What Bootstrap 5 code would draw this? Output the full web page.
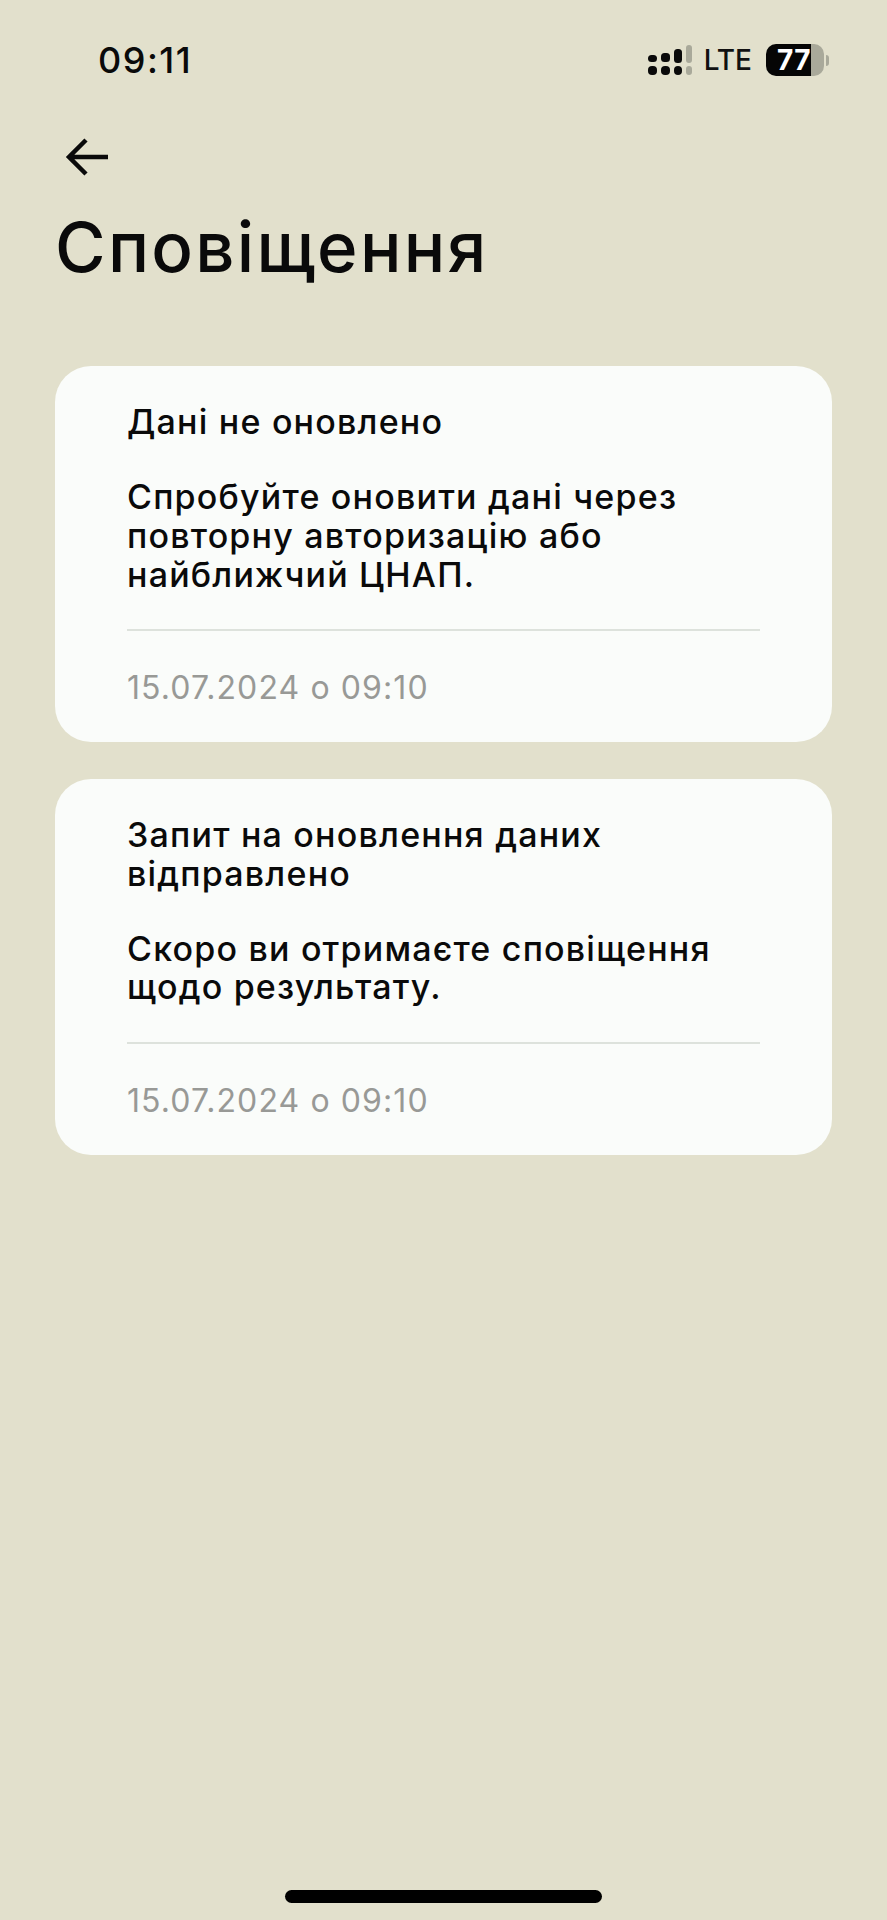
<!DOCTYPE html>
<html lang="uk">
<head>
<meta charset="utf-8">
<title>Сповіщення</title>
<link href="https://cdn.jsdelivr.net/npm/bootstrap@5.3.0/dist/css/bootstrap.min.css" rel="stylesheet">
<style>
body{background:#e2e0cc;color:#0a0a0a;font-family:"Inter","Liberation Sans",sans-serif;height:1920px;overflow:hidden}
.screen{padding:0 55px 17px}
.status-row{height:120px;padding:0 3px 0 43px}
.clock{font-size:36px;font-weight:500;letter-spacing:1.5px;line-height:1}
.lte{font-size:28px;font-weight:500;line-height:1;color:#111;margin:0 14px 0 11px}
.batt{width:58px;height:32px;border-radius:10px;background:linear-gradient(90deg,#050505 78%,#a9a99a 78%);color:#fff;font-size:28px;font-weight:700;line-height:32px;padding-left:11px;letter-spacing:.5px}
.nub{width:3px;height:11px;background:#a9a99a;border-radius:0 3px 3px 0;margin-left:2px}
.back-btn{height:40px;margin-left:10px;margin-top:18px}
.page-title{font-size:69px;font-weight:500;line-height:80px;margin:29px 0 79px;letter-spacing:2.3px}
.notice{background:#fafcfa;border:0;border-radius:36px;padding:37px 72px 35px;margin-bottom:36.5px}
.notice p{font-size:34px;font-weight:500;letter-spacing:1.2px;line-height:38.8px;margin:0}
.notice .gap-line{margin-top:36.2px}
.rule{height:2px;background:#dde2dc;margin:35px 0 37px}
.stamp{font-size:32px;line-height:39px;color:#989996;letter-spacing:1.1px}
.home-bar{width:317px;height:13px;background:#000;border-radius:7px;margin:auto auto 0}
</style>
</head>
<body>
<div class="screen d-flex flex-column vh-100">
  <div class="status-row d-flex align-items-center justify-content-between">
    <span class="clock">09:11</span>
    <div class="d-flex align-items-center">
      <svg width="45" height="30" viewBox="0 0 45 30" fill="#0a0a0a" aria-hidden="true">
        <rect x="0" y="10" width="9" height="7" rx="3.5"/><rect x="13" y="8" width="9" height="9" rx="3.5"/><rect x="26" y="4" width="8" height="14" rx="3.5"/>
        <rect x="0" y="21" width="9" height="9" rx="4"/><rect x="13" y="21" width="9" height="9" rx="4"/><rect x="26" y="21" width="8" height="9" rx="4"/>
        <rect x="38" y="0" width="6" height="18" rx="3" fill="#a9a99a"/><rect x="38" y="21" width="6" height="9" rx="3" fill="#a9a99a"/>
      </svg>
      <span class="lte">LTE</span>
      <div class="batt">77</div>
      <div class="nub"></div>
    </div>
  </div>
  <div class="back-btn">
    <svg width="44" height="38" viewBox="0 0 44 38" fill="none" stroke="#0a0a0a" stroke-width="4.5" aria-hidden="true"><path d="M43 19H4M21 2 4 19l17 17"/></svg>
  </div>
  <h1 class="page-title">Сповіщення</h1>
  <div class="card notice">
    <p>Дані не оновлено</p>
    <p class="gap-line">Спробуйте оновити дані через повторну авторизацію або найближчий ЦНАП.</p>
    <div class="rule"></div>
    <div class="stamp">15.07.2024 о 09:10</div>
  </div>
  <div class="card notice">
    <p>Запит на оновлення даних відправлено</p>
    <p class="gap-line">Скоро ви отримаєте сповіщення щодо результату.</p>
    <div class="rule"></div>
    <div class="stamp">15.07.2024 о 09:10</div>
  </div>
  <div class="home-bar"></div>
</div>
<script src="https://cdn.jsdelivr.net/npm/bootstrap@5.3.0/dist/js/bootstrap.bundle.min.js"></script>
</body>
</html>
